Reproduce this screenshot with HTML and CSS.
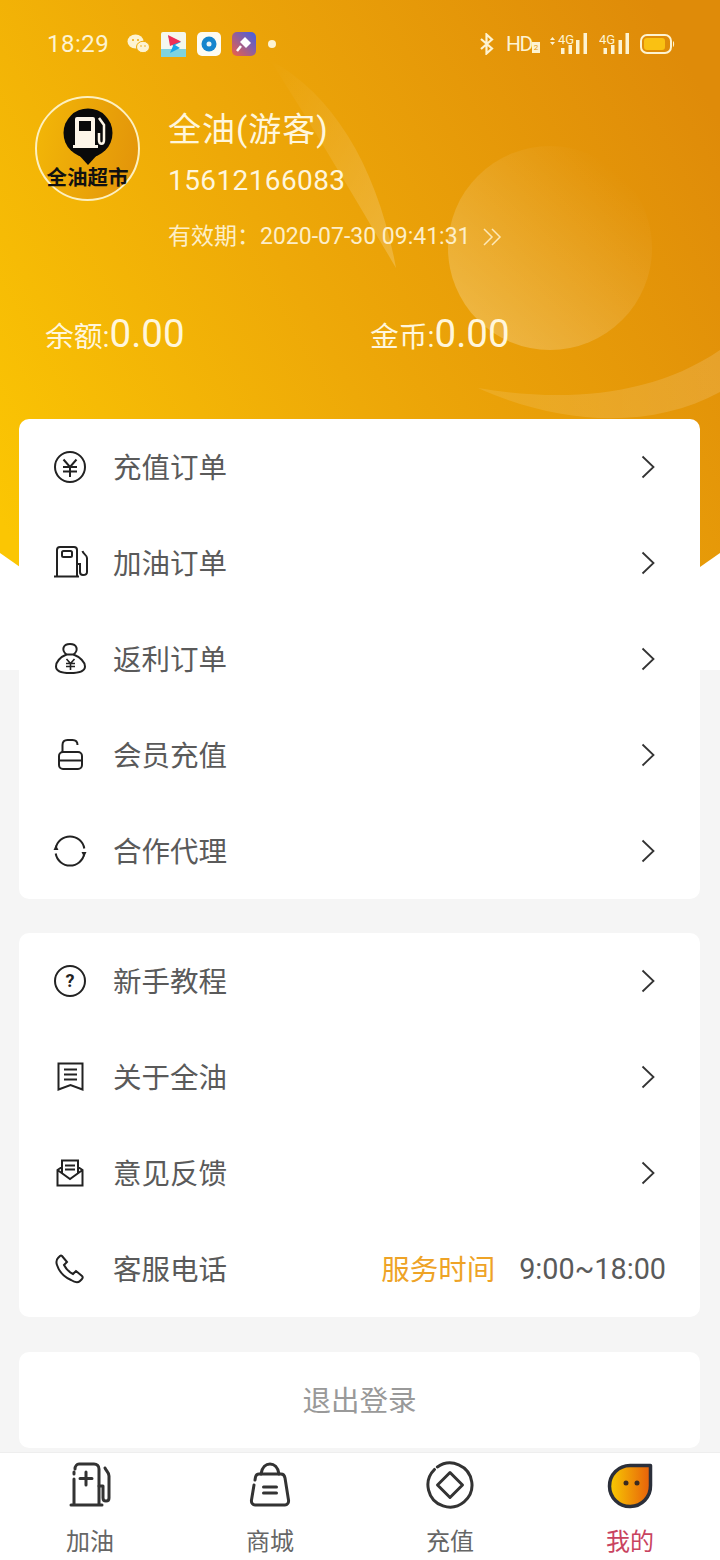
FILE: index.html
```html
<!DOCTYPE html>
<html lang="zh-CN">
  <head>
    <meta charset="utf-8">
    <title>全油</title>
    <link rel="stylesheet" href="styles.css">
  </head>
  <body>
    <div class="hero">
      <!-- yellow background with the light shapes on it -->
      <svg class="hero-bg" width="720" height="670" viewBox="0 0 720 670">
        <defs>
          <linearGradient id="heroFill" gradientUnits="userSpaceOnUse" x1="0" y1="520" x2="720" y2="120">
            <stop offset="0" stop-color="#fbc603"/>
            <stop offset="0.45" stop-color="#eea908"/>
            <stop offset="1" stop-color="#df8b09"/>
          </linearGradient>
          <linearGradient id="ballFill" x1="0.1" y1="0.9" x2="0.8" y2="0.1">
            <stop offset="0" stop-color="#fff" stop-opacity="0.24"/>
            <stop offset="1" stop-color="#fff" stop-opacity="0"/>
          </linearGradient>
          <linearGradient id="swooshFill" x1="1" y1="1" x2="0" y2="0">
            <stop offset="0" stop-color="#fff" stop-opacity="0.2"/>
            <stop offset="1" stop-color="#fff" stop-opacity="0"/>
          </linearGradient>
          <linearGradient id="lowerFill" x1="0" y1="0" x2="1" y2="0">
            <stop offset="0" stop-color="#fff" stop-opacity="0.1"/>
            <stop offset="1" stop-color="#fff" stop-opacity="0.14"/>
          </linearGradient>
        </defs>
        <path d="M0 0H720V553L700 567L360 640L20 567L0 553Z" fill="url(#heroFill)"/>
        <circle cx="550" cy="248" r="102" fill="url(#ballFill)"/>
        <path d="M270 60C335 95 378 170 396 268C365 215 315 130 270 60Z" fill="url(#swooshFill)"/>
        <path d="M478 388C560 402 650 398 720 350V392C650 430 560 425 478 388Z" fill="url(#lowerFill)"/>
      </svg>

      <div class="status-bar">
        <span class="clock">18:29</span>
        <svg class="st-wechat" width="23" height="20" viewBox="0 0 23 20">
          <ellipse cx="8.5" cy="7.5" rx="8" ry="7" fill="#fdf3d2"/>
          <ellipse cx="16" cy="13" rx="6.5" ry="5.7" fill="#fdf3d2" stroke="#efab08"/>
          <circle cx="6" cy="6" r="1" fill="#efab08"/>
          <circle cx="11" cy="6" r="1" fill="#efab08"/>
          <circle cx="14" cy="12" r="0.8" fill="#efab08"/>
          <circle cx="18" cy="12" r="0.8" fill="#efab08"/>
        </svg>
        <svg class="st-app" width="25" height="25" viewBox="0 0 25 25">
          <rect width="25" height="25" rx="2" fill="#f4f7ee"/>
          <rect y="17" width="25" height="8" fill="#7fd3df"/>
          <path d="M7 4L20 10L14 13L19 16L9 21L12 14Z" fill="#19a4e8"/>
          <path d="M7 3L20 9.5L9 14Z" fill="#ef2f55"/>
        </svg>
        <svg class="st-app" width="24" height="24" viewBox="0 0 24 24">
          <rect width="24" height="24" rx="5" fill="#fdfbf2"/>
          <circle cx="12" cy="12" r="7.5" fill="#1585cd"/>
          <circle cx="12" cy="12" r="2.5" fill="#e9f4f7"/>
        </svg>
        <svg class="st-app" width="24" height="24" viewBox="0 0 24 24">
          <defs>
            <linearGradient id="appFill" x1="1" y1="0" x2="0" y2="1">
              <stop offset="0" stop-color="#3f5fe6"/>
              <stop offset="1" stop-color="#ee5f48"/>
            </linearGradient>
          </defs>
          <rect width="24" height="24" rx="5" fill="url(#appFill)"/>
          <path d="M13 5L19 11L14 16L8 10Z" fill="#fff"/>
          <path d="M9 14L5 19" stroke="#fff" stroke-width="2.5"/>
        </svg>
        <span class="st-dot"></span>

        <span class="status-right">
          <svg width="16" height="22" viewBox="0 0 16 22">
            <path d="M2 6L13 15.5L7.5 20.5V1.5L13 6.500L2 16" fill="none" stroke="#fdf3d2" stroke-width="2.200"/>
          </svg>
          <span class="st-hd">HD</span>
          <span class="st-sim">2</span>
          <svg class="st-sig1" width="40" height="22" viewBox="0 0 40 22">
            <path d="M1 7L3.500 4L6 7ZM1 9L3.500 12L6 9Z" fill="#fdf3d2"/>
            <text x="9" y="11" class="st-4g">4G</text>
            <rect x="12" y="15" width="3.500" height="6" fill="#fdf3d2"/>
            <rect x="19.500" y="12" width="3.500" height="9" fill="#fdf3d2"/>
            <rect x="27" y="7" width="3.500" height="14" fill="#fdf3d2"/>
            <rect x="34.500" y="0" width="3.500" height="21" fill="#fdf3d2"/>
          </svg>
          <svg class="st-sig2" width="31" height="22" viewBox="0 0 31 22">
            <text x="0" y="11" class="st-4g">4G</text>
            <rect x="4.500" y="15" width="3.500" height="6" fill="#fdf3d2"/>
            <rect x="12" y="12" width="3.500" height="9" fill="#fdf3d2"/>
            <rect x="19.500" y="7" width="3.500" height="14" fill="#fdf3d2"/>
            <rect x="26.500" y="0" width="3.500" height="21" fill="#fdf3d2"/>
          </svg>
          <svg class="st-batt" width="35" height="20" viewBox="0 0 35 20">
            <rect x="1" y="1" width="30" height="18" rx="6" fill="none" stroke="#fdf3d2" stroke-width="2"/>
            <rect x="4" y="4" width="21" height="12" rx="3" fill="#fac112"/>
            <path d="M33 7c1.500 .5 1.500 5.500 0 6Z" fill="#fdf3d2"/>
          </svg>
        </span>
      </div>

      <div class="profile">
        <div class="avatar">
          <svg class="avatar-pin" width="52" height="57" viewBox="0 0 52 57">
            <circle cx="26" cy="25" r="24.500" fill="#0a0a0a"/>
            <path d="M16 46L26 57L36 46Z" fill="#0a0a0a"/>
            <path d="M13 11Q13 9 15 9H31Q33 9 33 11V37H36V40H11V37H13Z" fill="#fdf6e8"/>
            <rect x="17" y="13" width="12" height="10" fill="#0a0a0a"/>
            <path d="M37 10L42 17V32C42 37 37 37 37 32V25" fill="none" stroke="#fdf6e8" stroke-width="2.500"/>
          </svg>
          <span class="avatar-name">全油超市</span>
        </div>
        <div class="info">
          <div class="name">全油(游客)</div>
          <div class="phone">15612166083</div>
          <div class="expire">
            有效期：2020-07-30 09:41:31
            <svg class="expire-more" width="19" height="18" viewBox="0 0 19 18">
              <path d="M1 1L9 9L1 17M9 1L17 9L9 17" fill="none" stroke="#fde9b8" stroke-width="1.500"/>
            </svg>
          </div>
        </div>
      </div>

      <div class="balance">
        <div class="balance-item"><span class="balance-label">余额:</span>0.00</div>
        <div class="balance-item"><span class="balance-label">金币:</span>0.00</div>
      </div>
    </div>

    <div class="cards">
      <div class="card">
        <div class="row">
          <svg class="row-icon" width="36" height="36" viewBox="0 0 36 36">
            <circle cx="18" cy="18" r="15" class="line"/>
            <path d="M11.500 10.500L18 18L24.500 10.500M11 18H25M11 22.500H25M18 18V28" class="line"/>
          </svg>
          <span class="row-text">充值订单</span>
          <svg class="chevron" width="14" height="24" viewBox="0 0 14 24"><path d="M1.500 1.500L12.500 12L1.500 22.500"/></svg>
        </div>
        <div class="row">
          <svg class="row-icon" width="36" height="36" viewBox="0 0 36 36">
            <path d="M2 31.500H27M5 31.500V5C5 3 6 2 8 2H22C24 2 25 3 25 5V31.500" class="line"/>
            <rect x="10" y="6" width="10" height="6" rx="1.500" class="line"/>
            <path d="M25 19H28V27C28 29.500 29.500 30 31 30C33 30 35 29 35 27V13C35 10 31 9 30.500 6" class="line"/>
          </svg>
          <span class="row-text">加油订单</span>
          <svg class="chevron" width="14" height="24" viewBox="0 0 14 24"><path d="M1.500 1.500L12.500 12L1.500 22.500"/></svg>
        </div>
        <div class="row">
          <svg class="row-icon" width="36" height="36" viewBox="0 0 36 36">
            <path d="M14.500 13.500C9 9 11 3 18 3C25 3 27 9 21.500 13.500Z" class="line"/>
            <path d="M14.500 13.500C8 16 4 21 4 25.500C4 30 9 32 18 32C27 32 33 30 33 25.500C33 21 28 16 21.500 13.500" class="line"/>
            <path d="M14.500 18L18.500 22.500L22.500 18M14 22.500H23M14 25.500H23M18.500 22.500V29" class="line thin"/>
          </svg>
          <span class="row-text">返利订单</span>
          <svg class="chevron" width="14" height="24" viewBox="0 0 14 24"><path d="M1.500 1.500L12.500 12L1.500 22.500"/></svg>
        </div>
        <div class="row">
          <svg class="row-icon" width="36" height="36" viewBox="0 0 36 36">
            <rect x="7" y="15" width="23" height="17" rx="4" class="line"/>
            <path d="M7 23.500H30M10.500 15V8C10.500 5 12.500 3 15.500 3H20.500C23.500 3 25.500 5 25.500 8" class="line"/>
          </svg>
          <span class="row-text">会员充值</span>
          <svg class="chevron" width="14" height="24" viewBox="0 0 14 24"><path d="M1.500 1.500L12.500 12L1.500 22.500"/></svg>
        </div>
        <div class="row">
          <svg class="row-icon" width="36" height="36" viewBox="0 0 36 36">
            <path d="M3.700 15.500A14.500 14.500 0 0 1 32.300 15.500M32.300 20.500A14.500 14.500 0 0 1 3.700 20.500" class="line"/>
            <path d="M1.500 17L4 12L6.500 17ZM29.500 19L32 24L34.500 19Z" fill="#222"/>
          </svg>
          <span class="row-text">合作代理</span>
          <svg class="chevron" width="14" height="24" viewBox="0 0 14 24"><path d="M1.500 1.500L12.500 12L1.500 22.500"/></svg>
        </div>
      </div>

      <div class="card">
        <div class="row">
          <svg class="row-icon" width="36" height="36" viewBox="0 0 36 36">
            <circle cx="18" cy="18" r="15" class="line"/>
            <text x="18" y="24" class="question">?</text>
          </svg>
          <span class="row-text">新手教程</span>
          <svg class="chevron" width="14" height="24" viewBox="0 0 14 24"><path d="M1.500 1.500L12.500 12L1.500 22.500"/></svg>
        </div>
        <div class="row">
          <svg class="row-icon" width="36" height="36" viewBox="0 0 36 36">
            <path d="M6.500 4.500H30.500V30.500L18.500 26L6.500 30.500Z" class="line"/>
            <path d="M12 10.500H25M12 15.500H25M12 20.500H25" class="line"/>
          </svg>
          <span class="row-text">关于全油</span>
          <svg class="chevron" width="14" height="24" viewBox="0 0 14 24"><path d="M1.500 1.500L12.500 12L1.500 22.500"/></svg>
        </div>
        <div class="row">
          <svg class="row-icon" width="36" height="36" viewBox="0 0 36 36">
            <path d="M5.500 15V30.500H30.500V15L26 12V5.500H10V12ZM5.500 15L18 24L30.500 15M10 12V18M26 12V18M13 10.500H23M13 14.500H23" class="line"/>
          </svg>
          <span class="row-text">意见反馈</span>
          <svg class="chevron" width="14" height="24" viewBox="0 0 14 24"><path d="M1.500 1.500L12.500 12L1.500 22.500"/></svg>
        </div>
        <div class="row">
          <svg class="row-icon" width="36" height="36" viewBox="0 0 36 36">
            <path d="M10 5L15 11L12 14C14 18 17 21 21 23L24 20L30 25C30.800 25.800 30.800 27 30 28L28 30C26 32 22 31 19 29C12 26 7 20 5 14C4 11 4 9 6 7L8 5C8.600 4.400 9.400 4.400 10 5Z" class="line"/>
          </svg>
          <span class="row-text">客服电话</span>
          <span class="service-label">服务时间</span>
          <span class="service-time">9:00~18:00</span>
        </div>
      </div>

      <div class="card logout">退出登录</div>
    </div>

    <div class="tabbar">
      <div class="tab">
        <svg width="48" height="48" viewBox="0 0 48 48">
          <path d="M5 44H36M8 44V18M8 13V11M9 8C9 5 11 3 13 3H28C31 3 33 5 33 8V44" class="tab-line"/>
          <path d="M20 11V24M14 17.500H26" class="tab-line"/>
          <path d="M33 25H37V37C37 41 43 41 43 37V15C43 11 40 10 39 7" class="tab-line"/>
        </svg>
        <span class="tab-text">加油</span>
      </div>
      <div class="tab">
        <svg width="48" height="48" viewBox="0 0 48 48">
          <path d="M15 13C16 6 20 3 24 3C28 3 32 6 33 13" class="tab-line"/>
          <path d="M8 24L5.500 39C5 42 7 44 9 44H39C41 44 43 42 42.500 39L39 17C38.500 14 37 13 35 13H13C11 13 10 14 9.500 16L9 19" class="tab-line"/>
          <path d="M17.500 26H30.500M17.500 32H30.500" class="tab-line"/>
        </svg>
        <span class="tab-text">商城</span>
      </div>
      <div class="tab">
        <svg width="48" height="48" viewBox="0 0 48 48">
          <path d="M11.380 5.980A22 22 0 1 1 8.440 8.440" class="tab-line"/>
          <path d="M24 11.500L36.500 24L24 36.500L11.500 24Z" class="tab-line"/>
        </svg>
        <span class="tab-text">充值</span>
      </div>
      <div class="tab">
        <svg width="48" height="48" viewBox="0 0 48 48">
          <defs>
            <linearGradient id="meFill" x1="0" y1="0" x2="1" y2="0">
              <stop offset="0" stop-color="#f8cb02"/>
              <stop offset="1" stop-color="#e75f0b"/>
            </linearGradient>
          </defs>
          <path d="M24 4.500H44.500V24.500A20.500 20.500 0 1 1 24 4.500Z" fill="url(#meFill)" stroke="#2b2f3a" stroke-width="3.500" stroke-linejoin="round"/>
          <circle cx="20" cy="22" r="2.500" fill="#3a2a20"/>
          <circle cx="31" cy="22" r="2.500" fill="#3a2a20"/>
        </svg>
        <span class="tab-text tab-on">我的</span>
      </div>
    </div>
  </body>
</html>
```

FILE: styles.css
```css
* {
  margin: 0;
  padding: 0;
  box-sizing: border-box;
}

body {
  width: 720px;
  height: 1560px;
  overflow: hidden;
  background-color: #f5f5f5;
  font-family: Roboto, "Noto Sans CJK SC", sans-serif;
}

/* top yellow part */
.hero {
  position: relative;
  height: 670px;
  background-color: #fff;
  color: #fff6dc;
}

.hero-bg {
  position: absolute;
  left: 0;
  top: 0;
}

.status-bar,
.profile,
.balance {
  position: relative;
}

.status-bar {
  display: flex;
  align-items: center;
  height: 88px;
  padding: 0 45px 0 47px;
}

.clock {
  width: 61px;
  font-size: 24px;
  letter-spacing: 0.5px;
  color: #fdf3d2;
}

.st-wechat {
  margin-left: 19px;
}

.st-app {
  margin-left: 11px;
}

.st-dot {
  width: 8px;
  height: 8px;
  margin-left: 12px;
  border-radius: 50%;
  background-color: #fdf3d2;
}

.status-right {
  display: flex;
  align-items: center;
  margin-left: auto;
  color: #fdf3d2;
}

.st-hd {
  width: 24px;
  margin-left: 11px;
  font-size: 21px;
  letter-spacing: -1.500px;
}

.st-sim {
  width: 8px;
  height: 11px;
  margin: 6px 0 0 2px;
  background-color: #fdf3d2;
  color: #e6990a;
  font-size: 8px;
  line-height: 11px;
  text-align: center;
}

.st-sig1 {
  margin-left: 9px;
}

.st-sig2 {
  margin-left: 10px;
}

.st-batt {
  margin-left: 10px;
}

.st-4g {
  font-family: Roboto, sans-serif;
  font-size: 13px;
  fill: #fdf3d2;
}

.profile {
  display: flex;
  align-items: flex-start;
  gap: 28px;
  margin-top: 8px;
  padding-left: 35px;
}

.avatar {
  display: flex;
  flex: none;
  flex-direction: column;
  align-items: center;
  width: 105px;
  height: 105px;
  padding-top: 10px;
  border: 2px solid #fdf0c0;
  border-radius: 50%;
  background-image: linear-gradient(100deg, #f3b707, #e2930a);
}

.avatar-name {
  font-size: 20.500px;
  font-weight: 700;
  line-height: 26px;
  white-space: nowrap;
  color: #111;
}

.info {
  padding-top: 13px;
}

.name {
  font-size: 33px;
  line-height: 42px;
  letter-spacing: 1px;
}

.phone {
  margin-top: 12px;
  font-size: 28px;
  line-height: 36px;
  letter-spacing: 0.4px;
}

.expire {
  display: flex;
  align-items: center;
  margin-top: 23px;
  font-family: Roboto, "Noto Sans CJK TC", sans-serif;
  font-size: 23px;
  line-height: 30px;
  white-space: nowrap;
  color: #fdeec8;
}

.expire-more {
  margin-left: 12px;
}

.balance {
  display: grid;
  grid-template-columns: 325px 1fr;
  margin-top: 60px;
  padding-left: 45px;
}

.balance-item {
  font-size: 38.500px;
  line-height: 44px;
}

.balance-label {
  font-size: 28.800px;
}

/* white cards */
.cards {
  position: relative;
  margin: -251px 20px 0 19px;
}

.card {
  margin-bottom: 34px;
  border-radius: 10px;
  background-color: #fff;
}

.row {
  display: flex;
  align-items: center;
  height: 96px;
  padding: 0 34px 0 33px;
}

.row-icon {
  flex: none;
  margin-right: 25px;
}

.row-text {
  margin-top: -4px;
  font-size: 28.500px;
  color: #5a5a5a;
}

.line {
  fill: none;
  stroke: #222;
  stroke-width: 2;
}

.thin {
  stroke-width: 1.600;
}

.question {
  font-family: Roboto, sans-serif;
  font-size: 18px;
  font-weight: 700;
  text-anchor: middle;
  fill: #222;
}

.chevron {
  margin: 0 11px 0 auto;
}

.chevron path {
  fill: none;
  stroke: #333;
  stroke-width: 1.800;
}

.service-label {
  margin: -4px 0 0 auto;
  font-size: 28.500px;
  color: #eea326;
}

.service-time {
  margin-left: 24px;
  font-size: 28.800px;
  color: #5a5a5a;
}

.logout {
  height: 96px;
  margin-top: 35px;
  margin-bottom: 4px;
  padding-top: 2px;
  font-size: 28.500px;
  line-height: 96px;
  text-align: center;
  color: #999;
}

/* bottom tabs */
.tabbar {
  display: grid;
  grid-template-columns: repeat(4, 1fr);
  height: 108px;
  border-top: 1px solid #eee;
  background-color: #fff;
}

.tab {
  display: flex;
  flex-direction: column;
  align-items: center;
  padding-top: 8px;
}

.tab-line {
  fill: none;
  stroke: #333;
  stroke-width: 3;
  stroke-linecap: round;
  stroke-linejoin: round;
}

.tab-text {
  margin-top: 15px;
  font-size: 24px;
  line-height: 36px;
  color: #666;
}

.tab-on {
  color: #c9435f;
}
```
